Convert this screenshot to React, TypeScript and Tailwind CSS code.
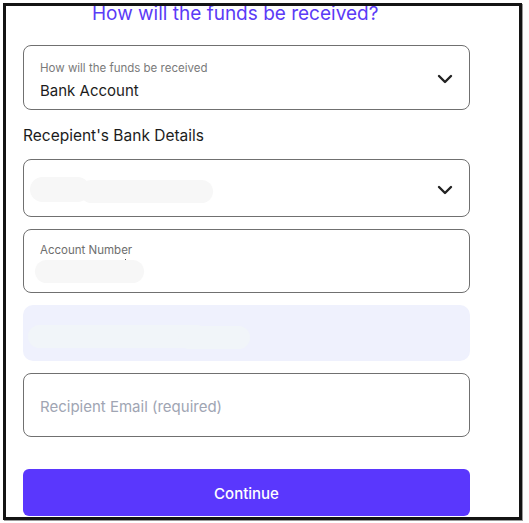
import React from "react";

// ─── Chevron ──────────────────────────────────────────────────────────────────

function Chevron() {
  return (
    <svg width="16" height="10" viewBox="0 0 16 10" fill="none" className="shrink-0">
      <polyline
        points="2,2 8,8 14,2"
        stroke="#222"
        strokeWidth="2.4"
        strokeLinecap="round"
        strokeLinejoin="round"
      />
    </svg>
  );
}

// ─── Redacted blur ────────────────────────────────────────────────────────────

function Smudge({ className }: { className: string }) {
  return <div className={`rounded-full ${className}`} />;
}

// ─── Page ─────────────────────────────────────────────────────────────────────

export default function App() {
  return (
    <div
      className="w-[529px] h-[523px] bg-white pl-[3px] pt-[3px]"
      style={{ fontFamily: "Inter, Roboto, 'Liberation Sans', sans-serif" }}
    >
      <div className="w-[519px] h-[517px] border-[3px] border-[#141414] overflow-hidden shadow-[1px_1px_0_#9a9a9a] flex flex-col pl-[17px]">
        {/* Header */}
        <h2 className="ml-[69px] text-[19px] leading-[16px] font-normal text-[#5b3bf6] m-0">
          How will the funds be received?
        </h2>

        {/* Funds select */}
        <div className="mt-[23px] w-[447px] h-[65px] shrink-0 rounded-[8px] border border-[#707070] flex items-center justify-between pl-[16px] pr-[16px]">
          <div className="flex flex-col self-start pt-[14px]">
            <span className="text-[11.5px] leading-[16px] text-[#7a7a7a]">How will the funds be received</span>
            <span className="mt-[5px] text-[15px] leading-[20px] text-[#1c1c1c]">Bank Account</span>
          </div>
          <div className="mt-[3px]">
            <Chevron />
          </div>
        </div>

        <p className="mt-[15px] text-[15.5px] leading-[21px] text-[#1c1c1c] m-0">Recepient's Bank Details</p>

        {/* Bank select */}
        <div className="mt-[13px] w-[447px] h-[58px] shrink-0 rounded-[8px] border border-[#707070] flex items-center justify-between pl-[6px] pr-[16px]">
          <div className="flex items-center mt-[2px]">
            <Smudge className="w-[60px] h-[25px] bg-[#f7f7f7]" />
            <Smudge className="-ml-[10px] mt-[5px] w-[133px] h-[23px] bg-[#f7f7f7]" />
          </div>
          <div className="mt-[3px]">
            <Chevron />
          </div>
        </div>

        {/* Account number */}
        <div className="mt-[12px] w-[447px] h-[64px] shrink-0 rounded-[8px] border border-[#707070] flex flex-col pl-[16px] pt-[12px]">
          <span className="text-[11.5px] leading-[16px] text-[#6e6e6e]">Account Number</span>
          <div className="relative">
            <Smudge className="-ml-[5px] mt-[2px] w-[109px] h-[23px] bg-[#f7f7f7]" />
            <span className="absolute left-[85px] top-[1px] w-[1px] h-[1px] bg-[#555]" />
          </div>
        </div>

        {/* Prefilled name */}
        <div className="mt-[12px] w-[447px] h-[56px] shrink-0 rounded-[10px] bg-[#eff1fd] flex items-center pl-[5px]">
          <div className="flex items-center mt-[6px]">
            <Smudge className="w-[180px] h-[23px] bg-[#f1f5f9]" />
            <Smudge className="-ml-[30px] mt-[2px] w-[72px] h-[23px] bg-[#f1f5f9]" />
          </div>
        </div>

        {/* Email */}
        <div className="mt-[12px] w-[447px] h-[64px] shrink-0 rounded-[8px] border border-[#707070] flex items-center pl-[16px] pt-[3px]">
          <span className="text-[15px] leading-[20px] text-[#a0a5b3]">Recipient Email (required)</span>
        </div>

        <button className="mt-[32px] w-[447px] h-[47px] shrink-0 rounded-[6px] bg-[#5a37fd] text-white text-[15px] font-medium flex items-center justify-center pt-[3px]">
          Continue
        </button>
      </div>
    </div>
  );
}
